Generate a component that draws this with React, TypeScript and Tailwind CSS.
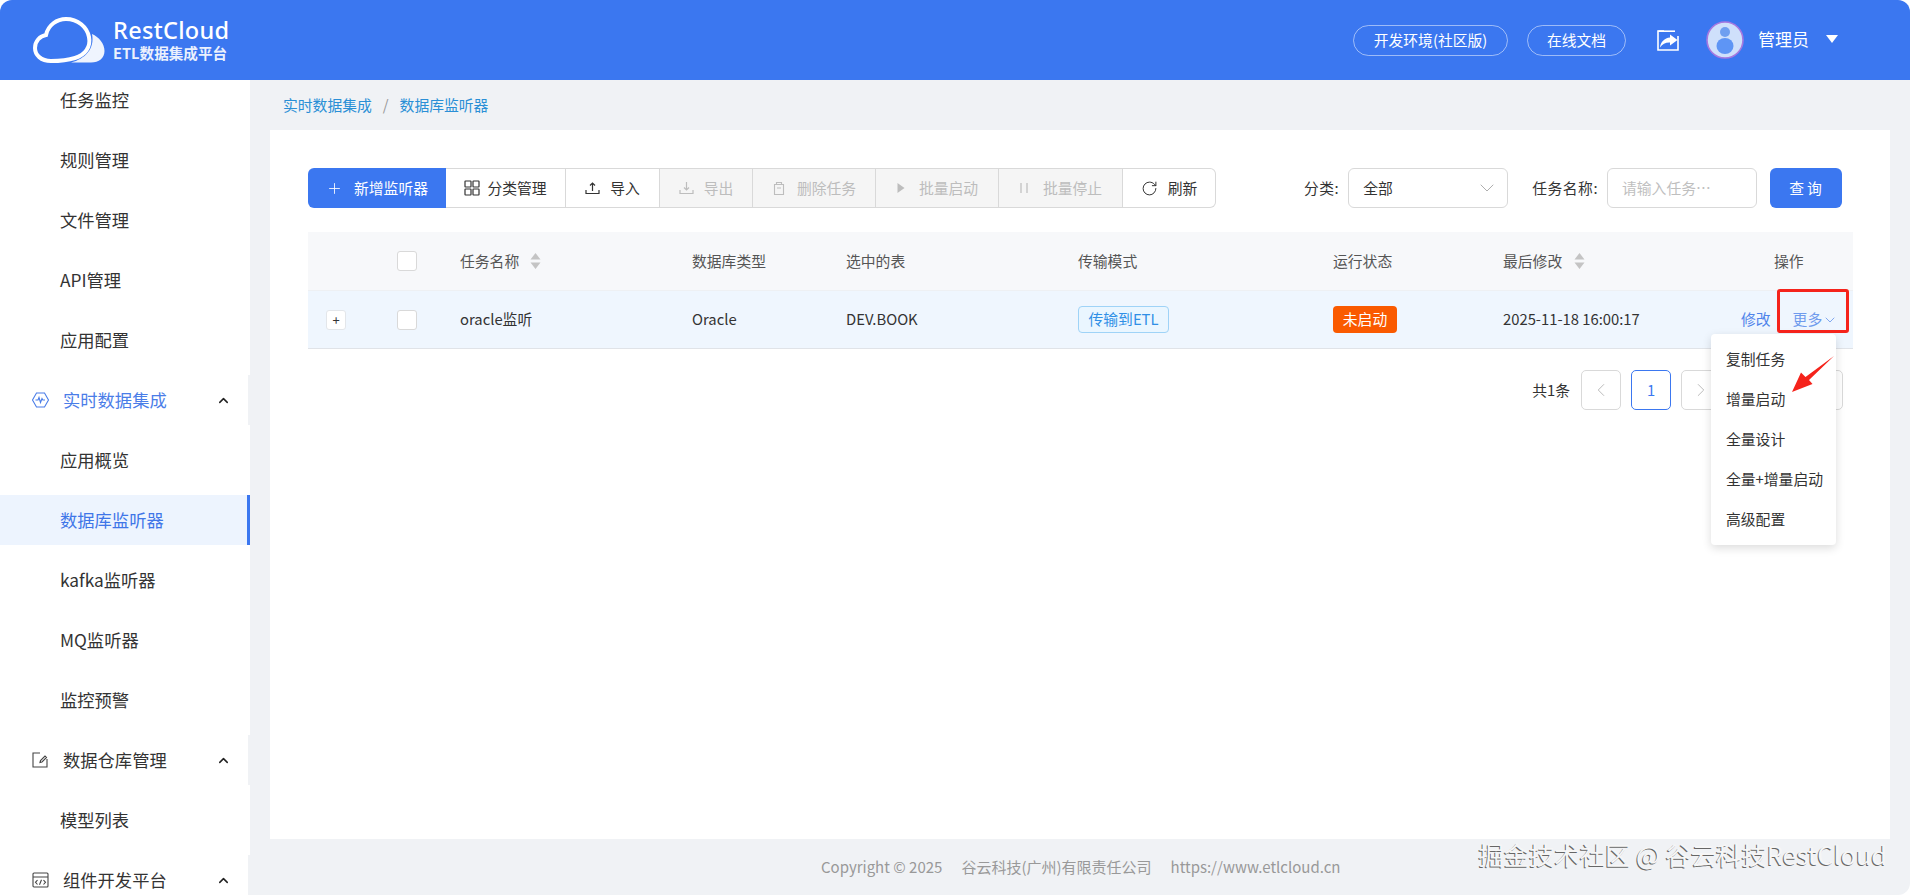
import React from "react";
import { Plus, ChevronDown, ChevronUp, ChevronLeft, ChevronRight, RotateCw } from "lucide-react";

function GridIcon() {
  return (
    <svg width="16" height="16" viewBox="0 0 16 16" fill="none" stroke="currentColor" strokeWidth="1.2">
      <rect x="1" y="1" width="6" height="6" rx="0.5" />
      <rect x="9" y="1" width="6" height="6" rx="0.5" />
      <rect x="1" y="9" width="6" height="6" rx="0.5" />
      <rect x="9" y="9" width="6" height="6" rx="0.5" />
    </svg>
  );
}
function TrayIcon({ down }: { down?: boolean }) {
  return (
    <svg width="15" height="14" viewBox="0 0 15 14" fill="none" stroke="currentColor" strokeWidth="1.2">
      <path d="M1 9v3.500h13V9" />
      {down ? <path d="M7.500 1v8M5 6.500 7.500 9 10 6.500" /> : <path d="M7.500 10V2M5 4.500 7.500 2 10 4.500" />}
    </svg>
  );
}
function BinIcon() {
  return (
    <svg width="14" height="15" viewBox="0 0 14 15" fill="none" stroke="currentColor" strokeWidth="1.1">
      <path d="M2.500 3.500h9v10h-9zM4.500 3.500V1.500h5v2M5 7h4" />
    </svg>
  );
}
function PlayIcon() {
  return (
    <svg width="10" height="12" viewBox="0 0 10 12" fill="currentColor">
      <path d="M1.500 1 8.500 6l-7 5z" />
    </svg>
  );
}
function PauseIcon() {
  return (
    <svg width="10" height="12" viewBox="0 0 10 12" fill="none" stroke="currentColor" strokeWidth="1.2">
      <path d="M2 1v10M8 1v10" />
    </svg>
  );
}
function SortIcon() {
  return (
    <svg width="11" height="16" viewBox="0 0 11 16" fill="#c4c4c4">
      <path d="M5.500 0 10.500 6.500H.5zM.5 9.500h10L5.500 16z" />
    </svg>
  );
}
function CloudLogo() {
  return (
    <svg width="72" height="46" viewBox="0 0 72 46" fill="none">
      <path
        d="M18 44C8 44 2 38 2 31C2 24 7 19 13 18C15 8 24 2 33 2C45 2 54 10 56 20C58 30 52 38 42 41C34 43.500 26 44 18 44Z"
        stroke="#fff"
        strokeWidth="4"
      />
      <path d="M59 17C66 20 71.500 27 71.500 34C71.500 41 66 45.500 58 45.500L38 45.500C52 42 62 32 59 17Z" fill="#fff" fillOpacity="0.92" />
    </svg>
  );
}
function ShareIcon() {
  return (
    <svg width="22" height="21" viewBox="0 0 22 21" fill="none">
      <path d="M7 1H1v19h20V6" stroke="#fff" strokeWidth="1.6" />
      <path d="M1.500 1.200H18" stroke="#fff" strokeWidth="1.6" />
      <path d="M13 4.500 20.500 10 13 15.500V12.500C8.500 12.300 5.500 14 3 17.500C3.500 12 7.500 8 13 7.500Z" fill="#fff" />
    </svg>
  );
}
function Avatar() {
  return (
    <svg width="38" height="38" viewBox="0 0 38 38">
      <circle cx="19" cy="19" r="18" fill="#cfe0fb" stroke="#a678e0" strokeWidth="1.6" />
      <circle cx="19" cy="11" r="5" fill="#6f9ff0" />
      <ellipse cx="19" cy="25" rx="8.500" ry="8" fill="#5e95f5" />
    </svg>
  );
}
function PulseIcon() {
  return (
    <svg width="17" height="16" viewBox="0 0 17 16" fill="none" stroke="currentColor" strokeWidth="1.1">
      <path d="M4.500 1h8l4 7-4 7h-8l-4-7z" />
      <path d="M3.500 8h2.500l1-2.500 1.500 5 1.500-4 .8 1.500h2.200" />
    </svg>
  );
}
function EditIcon() {
  return (
    <svg width="16" height="16" viewBox="0 0 16 16" fill="none" stroke="#444" strokeWidth="1.1">
      <path d="M8 1H1v14h14V7M1 1h4" />
      <path d="M8 10.500 8.500 8.500 13 4l1.500 1.500L10 10z" />
    </svg>
  );
}
function CodeIcon() {
  return (
    <svg width="17" height="16" viewBox="0 0 17 16" fill="none" stroke="#444" strokeWidth="1.1">
      <rect x="1" y="1" width="15" height="14" rx="1" />
      <path d="M1 5h15M5.500 8 3.500 10.300l2 2.200M11.500 8l2 2.300-2 2.200M9.500 7.800l-2 5" />
    </svg>
  );
}

type MenuItem = { label: string; group?: React.ReactNode; active?: boolean; hot?: boolean };
const menu: MenuItem[] = [
  { label: "任务监控" },
  { label: "规则管理" },
  { label: "文件管理" },
  { label: "API管理" },
  { label: "应用配置" },
  { label: "实时数据集成", group: <PulseIcon />, hot: true },
  { label: "应用概览" },
  { label: "数据库监听器", active: true },
  { label: "kafka监听器" },
  { label: "MQ监听器" },
  { label: "监控预警" },
  { label: "数据仓库管理", group: <EditIcon /> },
  { label: "模型列表" },
  { label: "组件开发平台", group: <CodeIcon /> },
];

function Sidebar() {
  return (
    <aside className="w-[250px] shrink-0 bg-white overflow-hidden">
      <div className="-mt-[5px] flex flex-col gap-[10px]">
        {menu.map((m) =>
          m.group ? (
            <div key={m.label} className="h-[50px] shrink-0 flex items-center pl-[32px] pr-[17px] border-r-2 border-[#f0f2f5]">
              <span className={m.hot ? "w-[31px] text-[#4a7de8]" : "w-[31px] text-[#444]"}>{m.group}</span>
              <span className={m.hot ? "flex-1 text-[17.300px] text-[#4a7de8]" : "flex-1 text-[17.300px] text-[#333]"}>{m.label}</span>
              <ChevronUp size={15} strokeWidth={2.4} className="text-[#222]" />
            </div>
          ) : (
            <div
              key={m.label}
              className={
                m.active
                  ? "h-[50px] shrink-0 flex items-center pl-[60px] text-[17.300px] text-[#3f76e8] bg-[#edf4fe] border-r-[3px] border-[#3b77f0]"
                  : "h-[50px] shrink-0 flex items-center pl-[60px] text-[17.300px] text-[#333]"
              }
            >
              {m.label}
            </div>
          )
        )}
      </div>
    </aside>
  );
}

function TopBar() {
  return (
    <header className="h-[80px] shrink-0 bg-[#3b77f0] flex items-center pl-[33px] pr-[72px] text-white">
      <CloudLogo />
      <div className="ml-[8px] flex flex-col w-[118px]">
        <span className="text-[23.500px] leading-[25px] font-medium tracking-[0.300px] font-['Noto_Sans',sans-serif] whitespace-nowrap">RestCloud</span>
        <span className="text-[14.600px] leading-[19px] font-bold whitespace-nowrap opacity-90">ETL数据集成平台</span>
      </div>
      <div className="ml-auto flex items-center">
        <span className="w-[155px] h-[31px] rounded-full border border-white/50 flex items-center justify-center text-[14.800px]">开发环境(社区版)</span>
        <span className="ml-[19px] w-[99px] h-[31px] rounded-full border border-white/50 flex items-center justify-center text-[14.800px]">在线文档</span>
        <span className="ml-[31px]"><ShareIcon /></span>
        <span className="ml-[27px]"><Avatar /></span>
        <span className="ml-[14px] mb-[3px] text-[17px]">管理员</span>
        <svg className="ml-[17px] mb-[3px]" width="12" height="8" viewBox="0 0 12 8" fill="#fff"><path d="M0 0h12L6 8z" /></svg>
      </div>
    </header>
  );
}

function Tool({ w, children, off, last, gap }: { w: string; children: React.ReactNode; off?: boolean; last?: boolean; gap: string }) {
  return (
    <div
      className={[
        w,
        gap,
        "h-full flex items-center justify-center text-[14.800px] border-y border-r border-[#d9d9d9]",
        off ? "bg-[#f5f5f5] text-[#bdbdbd]" : "bg-white text-[#333]",
        last ? "rounded-r-[6px]" : "",
      ].join(" ")}
    >
      {children}
    </div>
  );
}

function Toolbar() {
  return (
    <div className="h-[40px] flex items-center">
      <div className="w-[138px] h-full rounded-l-[6px] bg-[#3b77f0] text-white flex items-center justify-center gap-[11px] text-[14.800px]">
        <Plus size={17} strokeWidth={1.2} />
        新增监听器
      </div>
      <Tool w="w-[120px]" gap="gap-[7px]"><GridIcon />分类管理</Tool>
      <Tool w="w-[94px]" gap="gap-[10px]"><TrayIcon />导入</Tool>
      <Tool w="w-[93px]" gap="gap-[10px]" off><TrayIcon down />导出</Tool>
      <Tool w="w-[123px]" gap="gap-[11px]" off><BinIcon />删除任务</Tool>
      <Tool w="w-[123px]" gap="gap-[13px]" off><PlayIcon />批量启动</Tool>
      <Tool w="w-[124px]" gap="gap-[14px]" off><PauseIcon />批量停止</Tool>
      <Tool w="w-[93px]" gap="gap-[10px]" last><RotateCw size={17} strokeWidth={1.4} />刷新</Tool>

      <span className="ml-auto text-[14.800px] tracking-[0.500px] text-[#333]">分类:</span>
      <div className="ml-[9px] w-[160px] h-full rounded-[6px] border border-[#d9d9d9] flex items-center pl-[14px] pr-[8px] text-[14.800px] text-[#333] justify-between">
        全部
        <ChevronDown size={24} strokeWidth={0.8} className="text-[#999]" />
      </div>
      <span className="ml-[24px] text-[14.800px] tracking-[0.500px] text-[#333]">任务名称:</span>
      <div className="ml-[9px] w-[150px] h-full rounded-[6px] border border-[#d9d9d9] flex items-center pl-[14px] text-[14.800px] text-[#bfbfbf]">请输入任务…</div>
      <div className="ml-[13px] mr-[11px] pl-[2px] w-[72px] h-full rounded-[6px] bg-[#3b77f0] text-white flex items-center justify-center text-[14.800px] tracking-[3px]">查询</div>
    </div>
  );
}

const cols = "grid grid-cols-[89px_63px_232px_154px_232px_255px_170px_238px_1fr] items-center text-[14.800px]";

function Check() {
  return <span className="block w-[20px] h-[20px] rounded-[3px] border border-[#d9d9d9] bg-white" />;
}

function Table() {
  return (
    <div className="mt-[24px]">
      <div className={cols + " h-[59px] bg-[#f7f8fa] text-[#555] border-b border-[#eef0f3]"}>
        <span />
        <Check />
        <span className="flex items-center gap-[11px]">任务名称<SortIcon /></span>
        <span>数据库类型</span>
        <span>选中的表</span>
        <span>传输模式</span>
        <span>运行状态</span>
        <span className="flex items-center gap-[12px]">最后修改<SortIcon /></span>
        <span className="pl-[33px]">操作</span>
      </div>
      <div className={cols + " h-[58px] bg-[#eff6fe] text-[#333] border-b border-[#e0e3e8]"}>
        <span className="pl-[18px]">
          <span className="w-[20px] h-[20px] rounded-[3px] border border-[#e3e6ea] bg-white flex items-center justify-center text-[13px] leading-none text-[#333]">+</span>
        </span>
        <Check />
        <span>oracle监听</span>
        <span>Oracle</span>
        <span>DEV.BOOK</span>
        <span>
          <span className="inline-flex w-[91px] h-[27px] items-center justify-center rounded-[4px] border border-[#9fd3f7] bg-[#eaf6ff] text-[#2f8fe6]">传输到ETL</span>
        </span>
        <span>
          <span className="inline-flex w-[64px] h-[27px] items-center justify-center rounded-[4px] bg-[#fa5a00] text-white">未启动</span>
        </span>
        <span>2025-11-18 16:00:17</span>
        <span className="flex items-center whitespace-nowrap text-[#4f84ea]">
          修改
          <span className="ml-[22px] flex items-center text-[#6f9bed]">更多<ChevronDown size={16} strokeWidth={1.3} /></span>
        </span>
      </div>
    </div>
  );
}

function PageBox({ children, on }: { children?: React.ReactNode; on?: boolean }) {
  return (
    <span
      className={
        on
          ? "w-[40px] h-[40px] rounded-[5px] border border-[#3b77f0] flex items-center justify-center text-[14.800px] text-[#3b77f0]"
          : "w-[40px] h-[40px] rounded-[5px] border border-[#d9d9d9] flex items-center justify-center text-[#b5b5b5]"
      }
    >
      {children}
    </span>
  );
}

function Pager() {
  return (
    <div className="mt-[21px] pr-[10px] flex items-center justify-end gap-[10px] text-[14.800px] text-[#333]">
      <span className="mr-[1px]">共1条</span>
      <PageBox><ChevronLeft size={22} strokeWidth={1} /></PageBox>
      <PageBox on>1</PageBox>
      <PageBox><ChevronRight size={22} strokeWidth={1} /></PageBox>
      <span className="w-[112px] h-[40px] rounded-[5px] border border-[#d9d9d9]" />
    </div>
  );
}

function Dropdown() {
  const items = ["复制任务", "增量启动", "全量设计", "全量+增量启动", "高级配置"];
  return (
    <div className="absolute top-[204px] right-[54px] w-[125px] h-[211px] bg-white rounded-[4px] shadow-[0_3px_10px_rgba(0,0,0,0.14)] py-[5px] flex flex-col">
      {items.map((t) => (
        <div key={t} className="h-[40px] flex items-center pl-[15px] text-[14.800px] text-[#333] whitespace-nowrap">{t}</div>
      ))}
    </div>
  );
}

function Annotations() {
  return (
    <>
      <div className="absolute top-[159px] right-[41px] w-[72px] h-[44px] rounded-[3px] border-[3px] border-[#f5231b]" />
      <svg className="absolute top-[225px] right-[54px]" width="44" height="40" viewBox="0 0 44 40">
        <path d="M42 1 17 25l3.500 4L0 37l9-19.500 4.500 4.500z" fill="#f5231b" />
      </svg>
    </>
  );
}

export default function App() {
  return (
    <div className="w-[1910px] h-[895px] bg-white overflow-hidden">
      <div className="relative w-full h-full rounded-[12px] overflow-hidden flex flex-col font-['Noto_Sans_CJK_SC','Noto_Sans',sans-serif]">
        <TopBar />
        <div className="flex-1 flex min-h-0">
          <Sidebar />
          <main className="flex-1 bg-[#f0f2f5] flex flex-col px-[20px] min-w-0">
            <nav className="h-[50px] shrink-0 flex items-center pl-[13px] text-[14.800px] text-[#2a8fd6]">
              <span>实时数据集成</span>
              <span className="mx-[11px] text-[#999]">/</span>
              <span>数据库监听器</span>
            </nav>
            <section className="relative h-[709px] shrink-0 bg-white pt-[38px] pl-[38px] pr-[37px]">
              <Toolbar />
              <Table />
              <Pager />
              <Dropdown />
              <Annotations />
            </section>
            <footer className="flex-1 flex items-center pl-[551px] gap-[19px] text-[15px] text-[#999]">
              <span>Copyright © 2025</span>
              <span>谷云科技(广州)有限责任公司</span>
              <span>https://www.etlcloud.cn</span>
            </footer>
          </main>
        </div>
        <div className="absolute right-[23px] bottom-[28px] text-[25.300px] leading-[26px] text-[#f6f6f6] whitespace-nowrap [text-shadow:-1px_1px_0_#666]">
          掘金技术社区 @ 谷云科技RestCloud
        </div>
      </div>
    </div>
  );
}
